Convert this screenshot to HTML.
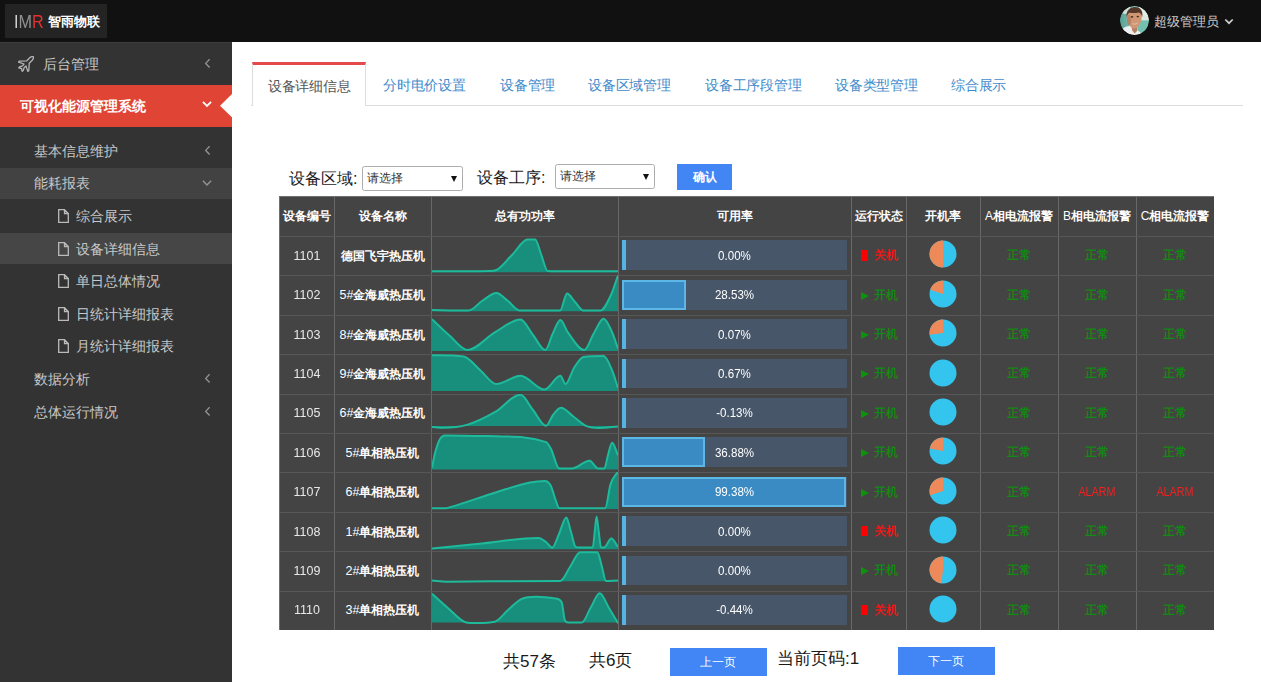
<!DOCTYPE html>
<html><head><meta charset="utf-8"><title>设备详细信息</title>
<style>
*{box-sizing:border-box;margin:0;padding:0}
html,body{width:1261px;height:682px;overflow:hidden;background:#fff;font-family:"Liberation Sans",sans-serif;}
.abs{position:absolute;white-space:nowrap}
#top{position:absolute;left:0;top:0;width:1261px;height:42px;background:#111;}
#logo{position:absolute;left:5px;top:4px;width:102px;height:34px;background:#242424;}
#logo .imr{position:absolute;left:8.5px;top:8px;font-size:18px;line-height:20px;color:#909090;transform:scaleX(0.9);transform-origin:0 0}
#logo .imr b{font-weight:normal;color:#e53030}#logo .imr i{font-style:normal;color:#d0d0d0}
#logo .cn{position:absolute;left:43px;top:10px;font-size:13px;line-height:16px;color:#fff;font-weight:bold;white-space:nowrap}
#user{position:absolute;left:1154px;top:12.5px;font-size:13px;line-height:18px;color:#ccc;white-space:nowrap}
#avatar{position:absolute;left:1120px;top:6px;width:29px;height:29px;border-radius:50%;overflow:hidden}
#side{position:absolute;left:0;top:42px;width:232px;height:640px;background:#333;}
#side .it{position:absolute;left:0;width:232px;color:#c8c8c8;font-size:14px;white-space:nowrap}
#side .it span{position:absolute;top:50%;transform:translateY(-50%);line-height:20px}
#side svg{position:absolute}
#main{position:absolute;left:232px;top:42px;width:1029px;height:640px;background:#fff}
.tab{position:absolute;top:62px;height:42px;font-size:14px;line-height:20px;color:#428bca;padding:13px 16px 0 15px;white-space:nowrap;letter-spacing:-0.2px}
.tab.act{color:#555;border:1px solid #ddd;border-top:3px solid #e5494b;border-bottom:none;background:#fff;padding:10.5px 0 0 15px;height:44px;width:114px;letter-spacing:-0.3px}
.lbl{position:absolute;font-size:16px;line-height:22px;color:#1a1a1a;white-space:nowrap}
.sel{position:absolute;height:25px;width:101px;border:1px solid #adadad;border-radius:2.5px;background:#fff;font-size:12px;color:#333;line-height:23px;padding-left:4px;white-space:nowrap}
.sel i{position:absolute;right:5px;top:9px;width:0;height:0;border-left:3.5px solid transparent;border-right:3.5px solid transparent;border-top:6px solid #111}
.btn{position:absolute;background:#4285f4;color:#fff;font-size:12px;text-align:center;white-space:nowrap}
#tbl{position:absolute;left:280px;top:197px;width:934px;height:433px;background:#444;}
.vl{position:absolute;top:0;width:1px;height:433px;background:#686868}
.hl{position:absolute;left:0;width:934px;height:1px;background:#575757}
.c{position:absolute;text-align:center;white-space:nowrap;color:#fff;font-size:12px;line-height:16px}
.th{font-weight:bold;font-size:12px}
.num{color:#e8e8e8;font-size:13px;transform:scaleX(0.96)}
.nm{font-weight:bold;font-size:12px}
.bar{position:absolute;left:342px;width:225px;height:29.9px;background:#475669}
.bar .f{position:absolute;left:0;top:0;height:29.9px;background:#3a8bc4;border:2px solid #5cb6e6}
.bar .t{position:absolute;left:0;width:225px;top:7.4px;text-align:center;font-size:13px;line-height:16px;color:#fff;transform:scaleX(0.89)}
.ok{color:#0c920c;-webkit-text-stroke:0.25px #0c920c}.al{color:#f02020}.on{color:#0c920c;-webkit-text-stroke:0.25px #0c920c}.off{color:#ff1010;-webkit-text-stroke:0.25px #ff1010}
</style></head><body>
<div id="top">
  <div id="logo"><span class="imr"><i>I</i>M<b>R</b></span><span class="cn">智雨物联</span></div>
  <div id="avatar"><svg width="29" height="29" viewBox="0 0 29 29"><defs><clipPath id="ac"><circle cx="14.5" cy="14.5" r="14.5"/></clipPath><filter id="ab" x="-10%" y="-10%" width="120%" height="120%"><feGaussianBlur stdDeviation="0.65"/></filter><linearGradient id="abg" x1="0" y1="0" x2="1" y2="0"><stop offset="0" stop-color="#4f9a8e"/><stop offset="0.5" stop-color="#86c8ba"/><stop offset="1" stop-color="#a8d8cc"/></linearGradient></defs><g clip-path="url(#ac)"><g filter="url(#ab)"><rect x="-2" y="-2" width="33" height="33" fill="url(#abg)"/><ellipse cx="5" cy="3" rx="5.5" ry="5" fill="#cfe0da"/><ellipse cx="24" cy="5" rx="6.5" ry="6" fill="#e3ede8"/><rect x="21" y="9.5" width="9" height="5" fill="#dde7e1"/><rect x="18" y="14.5" width="12" height="16" fill="#72c0b0"/><path d="M1,30 L2.5,23 C6,20 9,19.5 12,20.5 L15,27 L17,24 L20,26 L22,30Z" fill="#eef0f1"/><path d="M11.5,19 L17,19 L17,25 L14.5,27.5 L12,24Z" fill="#b9805f"/><path d="M6.8,11 C6.5,6 10,4.5 14.5,4.5 C19,4.5 22,6.5 21.8,11 C21.6,16 18.5,22.5 14.2,22.5 C10.2,22.5 7.2,16 6.8,11Z" fill="#cf9773"/><ellipse cx="9" cy="14" rx="2" ry="5" fill="#a66e50" opacity="0.5"/><path d="M6.6,11.5 C5.8,4.5 10,1 14.8,1 C19.8,1 23.3,4.2 22.3,11 C21.5,8.5 20.5,7 18.5,6.5 C15.5,7.5 11,7 9.2,6.8 C7.8,8 7,9.5 6.6,11.5Z" fill="#56372a"/><ellipse cx="12" cy="10.9" rx="1.3" ry="0.8" fill="#4a3020"/><ellipse cx="17.8" cy="10.6" rx="1.3" ry="0.8" fill="#4a3020"/><path d="M11.8,17 C13.5,19.3 16.8,19 18.3,16.6 C16.5,17.8 13.8,18 11.8,17Z" fill="#e9c9bd"/></g></g></svg></div>
  <div id="user">超级管理员</div>
  <svg class="abs" style="left:1224px;top:18px" width="10" height="7" viewBox="0 0 10 7"><path d="M1.3,1.5 L5,5.2 L8.7,1.5" fill="none" stroke="#d0d0d0" stroke-width="1.7"/></svg>
</div>
<div id="side">

<div class="it" style="top:0;height:43px;font-size:14px;border-top:1px solid #3d3d3d"><span style="left:43px">后台管理</span></div>
<svg style="left:18px;top:14px" width="16" height="16" viewBox="0 0 16 16"><path d="M15.3,0.7 C14,0.3 12.5,1 11.5,2 L8.8,4.8 L1.2,5.2 L0.6,6.2 L6,8 L4.5,9.8 L1.5,10.8 L0.7,11.8 L3.5,12.5 L4.2,15.3 L5.2,14.5 L6.2,11.5 L8,10 L9.8,15.4 L10.8,14.8 L11.2,7.2 L14,4.5 C15,3.5 15.7,2 15.3,0.7Z" fill="none" stroke="#b4b4b4" stroke-width="1.3" stroke-linejoin="round"/></svg>
<svg style="left:203px;top:16px" width="8" height="12" viewBox="0 0 8 12"><path d="M6.6,1.3 L2.7,5.4 L6.6,9.5" fill="none" stroke="#949494" stroke-width="1.35"/></svg>
<div class="it" style="top:43px;height:42.4px;background:#e04434;color:#fff;font-size:14px;font-weight:bold"><span style="left:20px">可视化能源管理系统</span></div>
<svg style="left:201.4px;top:58px" width="12" height="8" viewBox="0 0 12 8"><path d="M1.9,1.8 L6,5.9 L10.1,1.8" fill="none" stroke="#fff" stroke-width="1.8"/></svg>
<svg style="left:220px;top:51.5px" width="12" height="23.4" viewBox="0 0 12 23.4"><path d="M12,0 L0,11.7 L12,23.4Z" fill="#fff"/></svg>
<div class="it" style="top:92.7px;height:32.6px;"><span style="left:34px">基本信息维护</span></div>
<svg style="left:203px;top:103px" width="8" height="12" viewBox="0 0 8 12"><path d="M6.6,1.3 L2.7,5.4 L6.6,9.5" fill="none" stroke="#949494" stroke-width="1.35"/></svg>
<div class="it" style="top:125.7px;height:31.2px;background:#424242;"><span style="left:34px">能耗报表</span></div>
<svg style="left:201px;top:137.3px" width="12" height="8" viewBox="0 0 12 8"><path d="M1.9,1.8 L6,5.9 L10.1,1.8" fill="none" stroke="#949494" stroke-width="1.45"/></svg>
<div class="it" style="top:157.9px;height:32.6px;"><span style="left:75.5px">综合展示</span></div>
<svg style="left:58px;top:167.2px" width="11" height="14" viewBox="0 0 11 14"><path d="M0.7,0.7 H6.5 L10.3,4.5 V13.3 H0.7Z M6.5,0.7 V4.5 H10.3" fill="none" stroke="#bbb" stroke-width="1.3"/></svg>
<div class="it" style="top:191.1px;height:31.2px;background:#464646;"><span style="left:75.5px">设备详细信息</span></div>
<svg style="left:58px;top:199.7px" width="11" height="14" viewBox="0 0 11 14"><path d="M0.7,0.7 H6.5 L10.3,4.5 V13.3 H0.7Z M6.5,0.7 V4.5 H10.3" fill="none" stroke="#bbb" stroke-width="1.3"/></svg>
<div class="it" style="top:222.9px;height:32.6px;"><span style="left:75.5px">单日总体情况</span></div>
<svg style="left:58px;top:232.2px" width="11" height="14" viewBox="0 0 11 14"><path d="M0.7,0.7 H6.5 L10.3,4.5 V13.3 H0.7Z M6.5,0.7 V4.5 H10.3" fill="none" stroke="#bbb" stroke-width="1.3"/></svg>
<div class="it" style="top:255.5px;height:32.6px;"><span style="left:75.5px">日统计详细报表</span></div>
<svg style="left:58px;top:264.8px" width="11" height="14" viewBox="0 0 11 14"><path d="M0.7,0.7 H6.5 L10.3,4.5 V13.3 H0.7Z M6.5,0.7 V4.5 H10.3" fill="none" stroke="#bbb" stroke-width="1.3"/></svg>
<div class="it" style="top:288.1px;height:32.6px;"><span style="left:75.5px">月统计详细报表</span></div>
<svg style="left:58px;top:297.4px" width="11" height="14" viewBox="0 0 11 14"><path d="M0.7,0.7 H6.5 L10.3,4.5 V13.3 H0.7Z M6.5,0.7 V4.5 H10.3" fill="none" stroke="#bbb" stroke-width="1.3"/></svg>
<div class="it" style="top:320.7px;height:32.6px;"><span style="left:34px">数据分析</span></div>
<svg style="left:203px;top:331px" width="8" height="12" viewBox="0 0 8 12"><path d="M6.6,1.3 L2.7,5.4 L6.6,9.5" fill="none" stroke="#949494" stroke-width="1.35"/></svg>
<div class="it" style="top:353.3px;height:32.6px;"><span style="left:34px">总体运行情况</span></div>
<svg style="left:203px;top:363.6px" width="8" height="12" viewBox="0 0 8 12"><path d="M6.6,1.3 L2.7,5.4 L6.6,9.5" fill="none" stroke="#949494" stroke-width="1.35"/></svg>
</div>
<div id="main"></div>

<div class="abs" style="left:251px;top:105px;width:992px;height:1px;background:#ddd"></div>
<div class="tab act" style="left:252px">设备详细信息</div>
<div class="tab" style="left:368px">分时电价设置</div>
<div class="tab" style="left:485px">设备管理</div>
<div class="tab" style="left:573px">设备区域管理</div>
<div class="tab" style="left:690px">设备工序段管理</div>
<div class="tab" style="left:820px">设备类型管理</div>
<div class="tab" style="left:936px">综合展示</div>
<div class="lbl" style="left:289px;top:168px">设备区域:</div>
<div class="sel" style="left:362px;top:166px">请选择<i></i></div>
<div class="lbl" style="left:477px;top:166.5px">设备工序:</div>
<div class="sel" style="left:555px;top:164px;width:100px">请选择<i></i></div>
<div class="btn" style="left:677px;top:164px;width:55px;height:26px;line-height:26px;font-weight:bold">确认</div>
<div class="abs" style="left:279px;top:196px;width:935px;height:1px;background:#707070"></div><div class="abs" style="left:279px;top:196px;width:1px;height:434px;background:#707070"></div>
<div id="tbl">
<div class="vl" style="left:54px"></div>
<div class="vl" style="left:151px"></div>
<div class="vl" style="left:338px"></div>
<div class="vl" style="left:571px"></div>
<div class="vl" style="left:626px"></div>
<div class="vl" style="left:700px"></div>
<div class="vl" style="left:778px"></div>
<div class="vl" style="left:856px"></div>
<div class="c th" style="left:0px;width:54px;top:11px">设备编号</div>
<div class="c th" style="left:54px;width:97px;top:11px">设备名称</div>
<div class="c th" style="left:151px;width:187px;top:11px">总有功功率</div>
<div class="c th" style="left:338px;width:233px;top:11px">可用率</div>
<div class="c th" style="left:571px;width:55px;top:11px">运行状态</div>
<div class="c th" style="left:626px;width:74px;top:11px">开机率</div>
<div class="c th" style="left:700px;width:78px;top:11px"><span style="font-weight:normal">A</span>相电流报警</div>
<div class="c th" style="left:778px;width:78px;top:11px"><span style="font-weight:normal">B</span>相电流报警</div>
<div class="c th" style="left:856px;width:78px;top:11px"><span style="font-weight:normal">C</span>相电流报警</div>
<div class="hl" style="top:39px"></div>
<div class="c num" style="left:0;width:54px;top:50.8px">1101</div>
<div class="c nm" style="left:54px;width:97px;top:50.8px">德国飞宇热压机</div>
<svg class="abs" style="left:152px;top:39.0px;overflow:hidden" width="186" height="39.4" viewBox="0 0 186 39.4"><path d="M0.0,35.3 C19.3,35.3 38.7,35.3 58.0,35.0 C60.1,35.0 62.3,35.0 64.4,34.0 C69.6,31.6 74.8,24.1 80.0,19.0 C85.2,13.9 90.3,3.4 95.5,3.4 C98.1,3.4 100.6,3.4 103.2,3.4 C105.1,3.4 107.1,13.1 109.0,18.0 C111.2,23.6 113.5,34.8 115.7,35.0 C118.8,35.3 121.9,35.3 125.0,35.3 C145.3,35.3 165.7,35.3 186.0,35.3 L186,36.2 L0,36.2Z" fill="#178f7c"/><path d="M0.0,35.3 C19.3,35.3 38.7,35.3 58.0,35.0 C60.1,35.0 62.3,35.0 64.4,34.0 C69.6,31.6 74.8,24.1 80.0,19.0 C85.2,13.9 90.3,3.4 95.5,3.4 C98.1,3.4 100.6,3.4 103.2,3.4 C105.1,3.4 107.1,13.1 109.0,18.0 C111.2,23.6 113.5,34.8 115.7,35.0 C118.8,35.3 121.9,35.3 125.0,35.3 C145.3,35.3 165.7,35.3 186.0,35.3" fill="none" stroke="#1dbb9c" stroke-width="2" stroke-linejoin="round"/></svg>
<div class="bar" style="top:43.4px"><div class="f" style="width:4px;border:none;background:#56b4e4"></div><div class="t">0.00%</div></div>
<div class="c off" style="left:571px;width:56px;top:50.1px"><span style="display:inline-block;width:7px;height:10.5px;background:#f00;vertical-align:-1.5px;margin-right:6px"></span>关机</div>
<svg class="abs" style="left:649px;top:43.4px" width="28" height="28" viewBox="-14 -14 28 28"><circle r="13.5" fill="#33c5ee"/><path d="M0,0 L0,-13.5 A13.5,13.5 0 0 0 -0.00,13.50Z" fill="#ee8a5a"/></svg>
<div class="c ok" style="left:700px;width:78px;top:50.1px">正常</div>
<div class="c ok" style="left:778px;width:78px;top:50.1px">正常</div>
<div class="c ok" style="left:856px;width:78px;top:50.1px">正常</div>
<div class="hl" style="top:78px"></div>
<div class="c num" style="left:0;width:54px;top:90.2px">1102</div>
<div class="c nm" style="left:54px;width:97px;top:90.2px"><span style="font-weight:normal;font-size:12.5px">5#</span>金海威热压机</div>
<svg class="abs" style="left:152px;top:78.4px;overflow:hidden" width="186" height="39.4" viewBox="0 0 186 39.4"><path d="M0.0,35.0 C12.2,35.2 24.5,35.5 36.7,35.5 C41.1,35.5 45.6,28.8 50.0,26.0 C54.8,23.0 59.6,18.0 64.4,18.0 C68.3,18.0 72.1,23.1 76.0,26.0 C79.9,28.9 83.8,35.5 87.7,35.5 C101.2,35.5 114.6,35.5 128.1,35.5 C130.4,35.5 132.8,18.4 135.1,18.4 C137.7,18.4 140.4,24.2 143.0,27.0 C145.8,29.9 148.6,35.5 151.4,35.5 C157.1,35.5 162.8,35.5 168.5,35.5 C171.9,35.5 175.2,27.8 178.6,20.8 C181.1,15.6 183.5,7.3 186.0,0.6 L186,36.3 L0,36.3Z" fill="#178f7c"/><path d="M0.0,35.0 C12.2,35.2 24.5,35.5 36.7,35.5 C41.1,35.5 45.6,28.8 50.0,26.0 C54.8,23.0 59.6,18.0 64.4,18.0 C68.3,18.0 72.1,23.1 76.0,26.0 C79.9,28.9 83.8,35.5 87.7,35.5 C101.2,35.5 114.6,35.5 128.1,35.5 C130.4,35.5 132.8,18.4 135.1,18.4 C137.7,18.4 140.4,24.2 143.0,27.0 C145.8,29.9 148.6,35.5 151.4,35.5 C157.1,35.5 162.8,35.5 168.5,35.5 C171.9,35.5 175.2,27.8 178.6,20.8 C181.1,15.6 183.5,7.3 186.0,0.6" fill="none" stroke="#1dbb9c" stroke-width="2" stroke-linejoin="round"/></svg>
<div class="bar" style="top:82.8px"><div class="f" style="width:64px"></div><div class="t">28.53%</div></div>
<div class="c on" style="left:571px;width:56px;top:89.5px"><span style="display:inline-block;width:0;height:0;border-left:8px solid #0c920c;border-top:4.5px solid transparent;border-bottom:4.5px solid transparent;vertical-align:-1px;margin-right:5px"></span>开机</div>
<svg class="abs" style="left:649px;top:82.8px" width="28" height="28" viewBox="-14 -14 28 28"><circle r="13.5" fill="#33c5ee"/><path d="M0,0 L0,-13.5 A13.5,13.5 0 0 0 -12.84,-4.17Z" fill="#ee8a5a"/></svg>
<div class="c ok" style="left:700px;width:78px;top:89.5px">正常</div>
<div class="c ok" style="left:778px;width:78px;top:89.5px">正常</div>
<div class="c ok" style="left:856px;width:78px;top:89.5px">正常</div>
<div class="hl" style="top:118px"></div>
<div class="c num" style="left:0;width:54px;top:129.6px">1103</div>
<div class="c nm" style="left:54px;width:97px;top:129.6px"><span style="font-weight:normal;font-size:12.5px">8#</span>金海威热压机</div>
<svg class="abs" style="left:152px;top:117.8px;overflow:hidden" width="186" height="39.4" viewBox="0 0 186 39.4"><path d="M0.0,4.2 C6.0,9.8 12.0,15.8 18.0,21.0 C23.9,26.1 29.7,35.0 35.6,35.0 C44.7,35.0 53.7,22.6 62.8,17.4 C71.4,12.5 79.9,4.5 88.5,4.5 C92.7,4.5 96.8,14.9 101.0,20.0 C105.1,25.0 109.2,35.0 113.3,35.0 C115.9,35.0 118.4,23.1 121.0,18.0 C123.5,13.1 125.9,5.0 128.4,5.0 C130.9,5.0 133.4,14.0 135.9,17.4 C141.3,24.8 146.8,35.0 152.2,35.0 C155.5,35.0 158.7,23.3 162.0,18.0 C165.2,12.8 168.4,3.7 171.6,3.7 C174.4,3.7 177.2,10.9 180.0,17.0 C182.0,21.4 184.0,28.1 186.0,33.7 L186,36.1 L0,36.1Z" fill="#178f7c"/><path d="M0.0,4.2 C6.0,9.8 12.0,15.8 18.0,21.0 C23.9,26.1 29.7,35.0 35.6,35.0 C44.7,35.0 53.7,22.6 62.8,17.4 C71.4,12.5 79.9,4.5 88.5,4.5 C92.7,4.5 96.8,14.9 101.0,20.0 C105.1,25.0 109.2,35.0 113.3,35.0 C115.9,35.0 118.4,23.1 121.0,18.0 C123.5,13.1 125.9,5.0 128.4,5.0 C130.9,5.0 133.4,14.0 135.9,17.4 C141.3,24.8 146.8,35.0 152.2,35.0 C155.5,35.0 158.7,23.3 162.0,18.0 C165.2,12.8 168.4,3.7 171.6,3.7 C174.4,3.7 177.2,10.9 180.0,17.0 C182.0,21.4 184.0,28.1 186.0,33.7" fill="none" stroke="#1dbb9c" stroke-width="2" stroke-linejoin="round"/></svg>
<div class="bar" style="top:122.2px"><div class="f" style="width:4px;border:none;background:#56b4e4"></div><div class="t">0.07%</div></div>
<div class="c on" style="left:571px;width:56px;top:128.9px"><span style="display:inline-block;width:0;height:0;border-left:8px solid #0c920c;border-top:4.5px solid transparent;border-bottom:4.5px solid transparent;vertical-align:-1px;margin-right:5px"></span>开机</div>
<svg class="abs" style="left:649px;top:122.2px" width="28" height="28" viewBox="-14 -14 28 28"><circle r="13.5" fill="#33c5ee"/><path d="M0,0 L0,-13.5 A13.5,13.5 0 0 0 -13.39,1.69Z" fill="#ee8a5a"/></svg>
<div class="c ok" style="left:700px;width:78px;top:128.9px">正常</div>
<div class="c ok" style="left:778px;width:78px;top:128.9px">正常</div>
<div class="c ok" style="left:856px;width:78px;top:128.9px">正常</div>
<div class="hl" style="top:157px"></div>
<div class="c num" style="left:0;width:54px;top:169.0px">1104</div>
<div class="c nm" style="left:54px;width:97px;top:169.0px"><span style="font-weight:normal;font-size:12.5px">9#</span>金海威热压机</div>
<svg class="abs" style="left:152px;top:157.2px;overflow:hidden" width="186" height="39.4" viewBox="0 0 186 39.4"><path d="M0.0,1.3 C10.6,1.4 21.1,1.3 31.7,2.4 C37.1,3.0 42.6,11.4 48.0,16.0 C53.5,20.6 58.9,30.1 64.4,30.1 C72.4,30.1 80.5,21.8 88.5,21.8 C96.5,21.8 104.6,35.5 112.6,35.5 C117.9,35.5 123.1,21.8 128.4,21.8 C130.1,21.8 131.8,30.1 133.5,30.1 C136.3,30.1 139.2,18.4 142.0,14.0 C145.1,9.2 148.3,3.3 151.4,2.9 C158.1,2.1 164.9,2.1 171.6,2.1 C174.4,2.1 177.2,9.5 180.0,16.0 C182.0,20.7 184.0,28.0 186.0,34.0 L186,37.0 L0,37.0Z" fill="#178f7c"/><path d="M0.0,1.3 C10.6,1.4 21.1,1.3 31.7,2.4 C37.1,3.0 42.6,11.4 48.0,16.0 C53.5,20.6 58.9,30.1 64.4,30.1 C72.4,30.1 80.5,21.8 88.5,21.8 C96.5,21.8 104.6,35.5 112.6,35.5 C117.9,35.5 123.1,21.8 128.4,21.8 C130.1,21.8 131.8,30.1 133.5,30.1 C136.3,30.1 139.2,18.4 142.0,14.0 C145.1,9.2 148.3,3.3 151.4,2.9 C158.1,2.1 164.9,2.1 171.6,2.1 C174.4,2.1 177.2,9.5 180.0,16.0 C182.0,20.7 184.0,28.0 186.0,34.0" fill="none" stroke="#1dbb9c" stroke-width="2" stroke-linejoin="round"/></svg>
<div class="bar" style="top:161.6px"><div class="f" style="width:4px;border:none;background:#56b4e4"></div><div class="t">0.67%</div></div>
<div class="c on" style="left:571px;width:56px;top:168.3px"><span style="display:inline-block;width:0;height:0;border-left:8px solid #0c920c;border-top:4.5px solid transparent;border-bottom:4.5px solid transparent;vertical-align:-1px;margin-right:5px"></span>开机</div>
<svg class="abs" style="left:649px;top:161.6px" width="28" height="28" viewBox="-14 -14 28 28"><circle r="13.5" fill="#33c5ee"/></svg>
<div class="c ok" style="left:700px;width:78px;top:168.3px">正常</div>
<div class="c ok" style="left:778px;width:78px;top:168.3px">正常</div>
<div class="c ok" style="left:856px;width:78px;top:168.3px">正常</div>
<div class="hl" style="top:197px"></div>
<div class="c num" style="left:0;width:54px;top:208.4px">1105</div>
<div class="c nm" style="left:54px;width:97px;top:208.4px"><span style="font-weight:normal;font-size:12.5px">6#</span>金海威热压机</div>
<svg class="abs" style="left:152px;top:196.6px;overflow:hidden" width="186" height="39.4" viewBox="0 0 186 39.4"><path d="M0.0,32.9 C3.8,33.2 7.7,33.7 11.5,33.7 C19.3,33.7 27.1,33.1 34.9,30.9 C44.2,28.2 53.5,23.5 62.8,18.2 C71.4,13.4 79.9,0.8 88.5,0.8 C92.7,0.8 96.8,11.0 101.0,16.0 C105.4,21.3 109.7,31.8 114.1,31.8 C116.4,31.8 118.7,23.8 121.0,21.0 C123.6,17.7 126.3,13.8 128.9,13.8 C133.3,13.8 137.6,19.9 142.0,23.0 C146.2,26.0 150.3,30.3 154.5,32.1 C158.7,33.9 162.8,34.0 167.0,34.0 C173.3,34.0 179.7,33.0 186.0,32.5 L186,32.0 L0,32.0Z" fill="#178f7c"/><path d="M0.0,32.9 C3.8,33.2 7.7,33.7 11.5,33.7 C19.3,33.7 27.1,33.1 34.9,30.9 C44.2,28.2 53.5,23.5 62.8,18.2 C71.4,13.4 79.9,0.8 88.5,0.8 C92.7,0.8 96.8,11.0 101.0,16.0 C105.4,21.3 109.7,31.8 114.1,31.8 C116.4,31.8 118.7,23.8 121.0,21.0 C123.6,17.7 126.3,13.8 128.9,13.8 C133.3,13.8 137.6,19.9 142.0,23.0 C146.2,26.0 150.3,30.3 154.5,32.1 C158.7,33.9 162.8,34.0 167.0,34.0 C173.3,34.0 179.7,33.0 186.0,32.5" fill="none" stroke="#1dbb9c" stroke-width="2" stroke-linejoin="round"/></svg>
<div class="bar" style="top:201.0px"><div class="f" style="width:4px;border:none;background:#56b4e4"></div><div class="t">-0.13%</div></div>
<div class="c on" style="left:571px;width:56px;top:207.7px"><span style="display:inline-block;width:0;height:0;border-left:8px solid #0c920c;border-top:4.5px solid transparent;border-bottom:4.5px solid transparent;vertical-align:-1px;margin-right:5px"></span>开机</div>
<svg class="abs" style="left:649px;top:201.0px" width="28" height="28" viewBox="-14 -14 28 28"><circle r="13.5" fill="#33c5ee"/></svg>
<div class="c ok" style="left:700px;width:78px;top:207.7px">正常</div>
<div class="c ok" style="left:778px;width:78px;top:207.7px">正常</div>
<div class="c ok" style="left:856px;width:78px;top:207.7px">正常</div>
<div class="hl" style="top:236px"></div>
<div class="c num" style="left:0;width:54px;top:247.8px">1106</div>
<div class="c nm" style="left:54px;width:97px;top:247.8px"><span style="font-weight:normal;font-size:12.5px">5#</span>单相热压机</div>
<svg class="abs" style="left:152px;top:236.0px;overflow:hidden" width="186" height="39.4" viewBox="0 0 186 39.4"><path d="M0.0,34.7 C1.0,29.8 2.0,23.9 3.0,20.0 C4.7,13.6 6.3,8.9 8.0,6.0 C9.7,3.0 11.4,2.4 13.1,2.4 C30.2,2.4 47.3,2.9 64.4,3.3 C81.0,3.7 97.5,3.3 114.1,9.1 C115.7,9.7 117.4,12.9 119.0,16.0 C121.8,21.2 124.5,35.5 127.3,35.5 C131.5,35.5 135.6,35.5 139.8,35.5 C145.7,35.5 151.7,27.7 157.6,27.7 C160.5,27.7 163.3,35.5 166.2,35.5 C168.3,35.5 170.3,35.5 172.4,35.5 C173.6,35.5 174.8,26.0 176.0,22.0 C177.4,17.3 178.8,9.8 180.2,9.8 C182.1,9.8 184.1,18.1 186.0,22.3 L186,36.5 L0,36.5Z" fill="#178f7c"/><path d="M0.0,34.7 C1.0,29.8 2.0,23.9 3.0,20.0 C4.7,13.6 6.3,8.9 8.0,6.0 C9.7,3.0 11.4,2.4 13.1,2.4 C30.2,2.4 47.3,2.9 64.4,3.3 C81.0,3.7 97.5,3.3 114.1,9.1 C115.7,9.7 117.4,12.9 119.0,16.0 C121.8,21.2 124.5,35.5 127.3,35.5 C131.5,35.5 135.6,35.5 139.8,35.5 C145.7,35.5 151.7,27.7 157.6,27.7 C160.5,27.7 163.3,35.5 166.2,35.5 C168.3,35.5 170.3,35.5 172.4,35.5 C173.6,35.5 174.8,26.0 176.0,22.0 C177.4,17.3 178.8,9.8 180.2,9.8 C182.1,9.8 184.1,18.1 186.0,22.3" fill="none" stroke="#1dbb9c" stroke-width="2" stroke-linejoin="round"/></svg>
<div class="bar" style="top:240.4px"><div class="f" style="width:83px"></div><div class="t">36.88%</div></div>
<div class="c on" style="left:571px;width:56px;top:247.1px"><span style="display:inline-block;width:0;height:0;border-left:8px solid #0c920c;border-top:4.5px solid transparent;border-bottom:4.5px solid transparent;vertical-align:-1px;margin-right:5px"></span>开机</div>
<svg class="abs" style="left:649px;top:240.4px" width="28" height="28" viewBox="-14 -14 28 28"><circle r="13.5" fill="#33c5ee"/><path d="M0,0 L0,-13.5 A13.5,13.5 0 0 0 -13.26,-2.53Z" fill="#ee8a5a"/></svg>
<div class="c ok" style="left:700px;width:78px;top:247.1px">正常</div>
<div class="c ok" style="left:778px;width:78px;top:247.1px">正常</div>
<div class="c ok" style="left:856px;width:78px;top:247.1px">正常</div>
<div class="hl" style="top:275px"></div>
<div class="c num" style="left:0;width:54px;top:287.2px">1107</div>
<div class="c nm" style="left:54px;width:97px;top:287.2px"><span style="font-weight:normal;font-size:12.5px">6#</span>单相热压机</div>
<svg class="abs" style="left:152px;top:275.4px;overflow:hidden" width="186" height="39.4" viewBox="0 0 186 39.4"><path d="M0.0,36.2 C4.7,36.2 9.3,36.2 14.0,36.2 C16.0,36.2 18.0,35.2 20.0,34.6 C34.8,30.2 49.6,24.7 64.4,20.2 C75.6,16.8 86.8,12.8 98.0,10.6 C102.9,9.6 107.7,9.0 112.6,9.0 C114.7,9.0 116.7,9.8 118.8,13.7 C120.4,16.6 121.9,23.6 123.5,27.7 C124.8,31.0 126.0,36.2 127.3,36.2 C142.6,36.2 157.9,36.2 173.2,36.2 C175.0,36.2 176.8,17.6 178.6,12.1 C181.1,4.5 183.5,3.8 186.0,-0.3 L186,37 L0,37Z" fill="#178f7c"/><path d="M0.0,36.2 C4.7,36.2 9.3,36.2 14.0,36.2 C16.0,36.2 18.0,35.2 20.0,34.6 C34.8,30.2 49.6,24.7 64.4,20.2 C75.6,16.8 86.8,12.8 98.0,10.6 C102.9,9.6 107.7,9.0 112.6,9.0 C114.7,9.0 116.7,9.8 118.8,13.7 C120.4,16.6 121.9,23.6 123.5,27.7 C124.8,31.0 126.0,36.2 127.3,36.2 C142.6,36.2 157.9,36.2 173.2,36.2 C175.0,36.2 176.8,17.6 178.6,12.1 C181.1,4.5 183.5,3.8 186.0,-0.3" fill="none" stroke="#1dbb9c" stroke-width="2" stroke-linejoin="round"/></svg>
<div class="bar" style="top:279.8px"><div class="f" style="width:224px"></div><div class="t">99.38%</div></div>
<div class="c on" style="left:571px;width:56px;top:286.5px"><span style="display:inline-block;width:0;height:0;border-left:8px solid #0c920c;border-top:4.5px solid transparent;border-bottom:4.5px solid transparent;vertical-align:-1px;margin-right:5px"></span>开机</div>
<svg class="abs" style="left:649px;top:279.8px" width="28" height="28" viewBox="-14 -14 28 28"><circle r="13.5" fill="#33c5ee"/><path d="M0,0 L0,-13.5 A13.5,13.5 0 0 0 -12.84,4.17Z" fill="#ee8a5a"/></svg>
<div class="c ok" style="left:700px;width:78px;top:286.5px">正常</div>
<div class="c al" style="left:778px;width:78px;top:286.5px;transform:scaleX(0.9)">ALARM</div>
<div class="c al" style="left:856px;width:78px;top:286.5px;transform:scaleX(0.9)">ALARM</div>
<div class="hl" style="top:315px"></div>
<div class="c num" style="left:0;width:54px;top:326.6px">1108</div>
<div class="c nm" style="left:54px;width:97px;top:326.6px"><span style="font-weight:normal;font-size:12.5px">1#</span>单相热压机</div>
<svg class="abs" style="left:152px;top:314.8px;overflow:hidden" width="186" height="39.4" viewBox="0 0 186 39.4"><path d="M0.0,36.5 C16.7,34.8 33.3,33.2 50.0,31.5 C68.8,29.6 87.6,25.9 106.4,25.9 C108.9,25.9 111.5,28.2 114.0,30.0 C116.1,31.5 118.2,35.7 120.3,35.7 C122.5,35.7 124.8,26.8 127.0,22.0 C129.4,16.7 131.9,5.4 134.3,5.4 C135.9,5.4 137.4,15.1 139.0,20.0 C140.6,24.9 142.1,34.2 143.7,34.9 C145.1,35.5 146.6,35.5 148.0,35.5 C152.3,35.5 156.5,35.5 160.8,35.5 C161.4,35.5 162.1,25.1 162.7,20.0 C163.3,14.8 164.0,4.6 164.6,4.6 C165.3,4.6 166.1,14.8 166.8,20.0 C167.5,25.1 168.3,35.5 169.0,35.5 C170.0,35.5 171.0,35.5 172.0,35.5 C174.5,35.5 176.9,26.4 179.4,26.4 C181.6,26.4 183.8,32.1 186.0,34.9 L186,37.2 L0,37.2Z" fill="#178f7c"/><path d="M0.0,36.5 C16.7,34.8 33.3,33.2 50.0,31.5 C68.8,29.6 87.6,25.9 106.4,25.9 C108.9,25.9 111.5,28.2 114.0,30.0 C116.1,31.5 118.2,35.7 120.3,35.7 C122.5,35.7 124.8,26.8 127.0,22.0 C129.4,16.7 131.9,5.4 134.3,5.4 C135.9,5.4 137.4,15.1 139.0,20.0 C140.6,24.9 142.1,34.2 143.7,34.9 C145.1,35.5 146.6,35.5 148.0,35.5 C152.3,35.5 156.5,35.5 160.8,35.5 C161.4,35.5 162.1,25.1 162.7,20.0 C163.3,14.8 164.0,4.6 164.6,4.6 C165.3,4.6 166.1,14.8 166.8,20.0 C167.5,25.1 168.3,35.5 169.0,35.5 C170.0,35.5 171.0,35.5 172.0,35.5 C174.5,35.5 176.9,26.4 179.4,26.4 C181.6,26.4 183.8,32.1 186.0,34.9" fill="none" stroke="#1dbb9c" stroke-width="2" stroke-linejoin="round"/></svg>
<div class="bar" style="top:319.2px"><div class="f" style="width:4px;border:none;background:#56b4e4"></div><div class="t">0.00%</div></div>
<div class="c off" style="left:571px;width:56px;top:325.9px"><span style="display:inline-block;width:7px;height:10.5px;background:#f00;vertical-align:-1.5px;margin-right:6px"></span>关机</div>
<svg class="abs" style="left:649px;top:319.2px" width="28" height="28" viewBox="-14 -14 28 28"><circle r="13.5" fill="#33c5ee"/></svg>
<div class="c ok" style="left:700px;width:78px;top:325.9px">正常</div>
<div class="c ok" style="left:778px;width:78px;top:325.9px">正常</div>
<div class="c ok" style="left:856px;width:78px;top:325.9px">正常</div>
<div class="hl" style="top:354px"></div>
<div class="c num" style="left:0;width:54px;top:366.0px">1109</div>
<div class="c nm" style="left:54px;width:97px;top:366.0px"><span style="font-weight:normal;font-size:12.5px">2#</span>单相热压机</div>
<svg class="abs" style="left:152px;top:354.2px;overflow:hidden" width="186" height="39.4" viewBox="0 0 186 39.4"><path d="M0.0,29.4 C4.9,29.8 9.8,30.7 14.7,30.7 C29.8,30.7 44.9,30.3 60.0,30.3 C82.7,30.3 105.4,30.3 128.1,30.0 C131.4,30.0 134.7,20.7 138.0,16.0 C141.4,11.1 144.9,1.2 148.3,1.2 C154.0,1.2 159.7,1.2 165.4,1.2 C166.9,1.2 168.5,10.8 170.0,16.0 C171.3,20.5 172.7,30.1 174.0,30.1 C178.0,30.1 182.0,29.6 186.0,29.4 L186,30.3 L0,30.3Z" fill="#178f7c"/><path d="M0.0,29.4 C4.9,29.8 9.8,30.7 14.7,30.7 C29.8,30.7 44.9,30.3 60.0,30.3 C82.7,30.3 105.4,30.3 128.1,30.0 C131.4,30.0 134.7,20.7 138.0,16.0 C141.4,11.1 144.9,1.2 148.3,1.2 C154.0,1.2 159.7,1.2 165.4,1.2 C166.9,1.2 168.5,10.8 170.0,16.0 C171.3,20.5 172.7,30.1 174.0,30.1 C178.0,30.1 182.0,29.6 186.0,29.4" fill="none" stroke="#1dbb9c" stroke-width="2" stroke-linejoin="round"/></svg>
<div class="bar" style="top:358.6px"><div class="f" style="width:4px;border:none;background:#56b4e4"></div><div class="t">0.00%</div></div>
<div class="c on" style="left:571px;width:56px;top:365.3px"><span style="display:inline-block;width:0;height:0;border-left:8px solid #0c920c;border-top:4.5px solid transparent;border-bottom:4.5px solid transparent;vertical-align:-1px;margin-right:5px"></span>开机</div>
<svg class="abs" style="left:649px;top:358.6px" width="28" height="28" viewBox="-14 -14 28 28"><circle r="13.5" fill="#33c5ee"/><path d="M0,0 L0,-13.5 A13.5,13.5 0 0 0 -1.69,13.39Z" fill="#ee8a5a"/></svg>
<div class="c ok" style="left:700px;width:78px;top:365.3px">正常</div>
<div class="c ok" style="left:778px;width:78px;top:365.3px">正常</div>
<div class="c ok" style="left:856px;width:78px;top:365.3px">正常</div>
<div class="hl" style="top:394px"></div>
<div class="c num" style="left:0;width:54px;top:405.4px">1110</div>
<div class="c nm" style="left:54px;width:97px;top:405.4px"><span style="font-weight:normal;font-size:12.5px">3#</span>单相热压机</div>
<svg class="abs" style="left:152px;top:393.6px;overflow:hidden" width="186" height="39.4" viewBox="0 0 186 39.4"><path d="M0.0,2.7 C5.7,7.8 11.3,13.2 17.0,18.0 C22.7,22.8 28.4,30.5 34.1,31.4 C37.7,32.0 41.4,32.0 45.0,32.0 C50.9,32.0 56.9,32.0 62.8,30.7 C67.2,29.7 71.6,22.8 76.0,19.0 C80.4,15.2 84.9,10.1 89.3,8.1 C94.5,5.8 99.6,5.8 104.8,5.8 C111.0,5.8 117.2,6.5 123.4,7.4 C125.5,7.7 127.6,7.4 129.7,11.2 C130.7,13.1 131.8,26.9 132.8,29.1 C133.9,31.4 134.9,31.4 136.0,31.4 C140.7,31.4 145.3,31.4 150.0,31.4 C153.0,31.4 156.0,20.9 159.0,16.0 C161.9,11.2 164.8,2.2 167.7,2.2 C170.8,2.2 173.9,11.9 177.0,17.0 C180.0,21.9 183.0,27.1 186.0,32.2 L186,31.6 L0,31.6Z" fill="#178f7c"/><path d="M0.0,2.7 C5.7,7.8 11.3,13.2 17.0,18.0 C22.7,22.8 28.4,30.5 34.1,31.4 C37.7,32.0 41.4,32.0 45.0,32.0 C50.9,32.0 56.9,32.0 62.8,30.7 C67.2,29.7 71.6,22.8 76.0,19.0 C80.4,15.2 84.9,10.1 89.3,8.1 C94.5,5.8 99.6,5.8 104.8,5.8 C111.0,5.8 117.2,6.5 123.4,7.4 C125.5,7.7 127.6,7.4 129.7,11.2 C130.7,13.1 131.8,26.9 132.8,29.1 C133.9,31.4 134.9,31.4 136.0,31.4 C140.7,31.4 145.3,31.4 150.0,31.4 C153.0,31.4 156.0,20.9 159.0,16.0 C161.9,11.2 164.8,2.2 167.7,2.2 C170.8,2.2 173.9,11.9 177.0,17.0 C180.0,21.9 183.0,27.1 186.0,32.2" fill="none" stroke="#1dbb9c" stroke-width="2" stroke-linejoin="round"/></svg>
<div class="bar" style="top:398.0px"><div class="f" style="width:4px;border:none;background:#56b4e4"></div><div class="t">-0.44%</div></div>
<div class="c off" style="left:571px;width:56px;top:404.7px"><span style="display:inline-block;width:7px;height:10.5px;background:#f00;vertical-align:-1.5px;margin-right:6px"></span>关机</div>
<svg class="abs" style="left:649px;top:398.0px" width="28" height="28" viewBox="-14 -14 28 28"><circle r="13.5" fill="#33c5ee"/></svg>
<div class="c ok" style="left:700px;width:78px;top:404.7px">正常</div>
<div class="c ok" style="left:778px;width:78px;top:404.7px">正常</div>
<div class="c ok" style="left:856px;width:78px;top:404.7px">正常</div>
</div>
<div class="lbl" style="left:503px;top:651px;font-size:17px">共57条</div>
<div class="lbl" style="left:589px;top:650px;font-size:17px">共6页</div>
<div class="btn" style="left:670px;top:648px;width:96.5px;height:28px;line-height:28px">上一页</div>
<div class="lbl" style="left:777px;top:648px;font-size:17px">当前页码:1</div>
<div class="btn" style="left:898px;top:647px;width:96.5px;height:28.4px;line-height:28px">下一页</div>
</body></html>
